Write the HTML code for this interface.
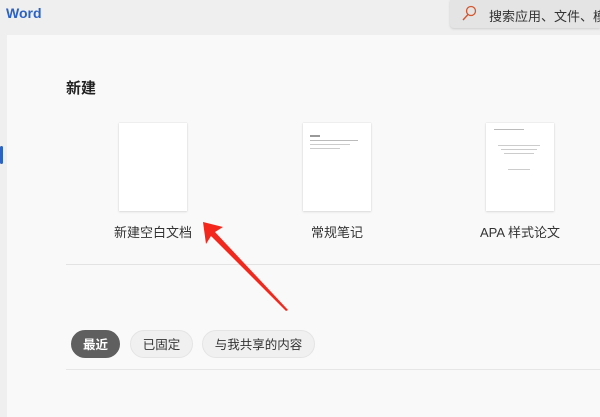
<!DOCTYPE html>
<html><head><meta charset="utf-8"><style>
body{margin:0;width:600px;height:417px;overflow:hidden;background:#efefef;font-family:"Liberation Sans","Noto Sans CJK SC",sans-serif;position:relative}
.a{position:absolute}
.doc{position:absolute;top:123px;width:68px;height:88px;background:#fff;box-shadow:0 0 1px #ccc,0 1px 2px #ddd}
.lbl{position:absolute;top:222px;font-size:13px;color:#333;text-align:center;width:160px}
.pill{position:absolute;top:330px;height:28px;line-height:28px;border-radius:14px;font-size:12.5px;text-align:center;background:#f0f0f0;border:1px solid #e4e4e4;color:#333;box-sizing:border-box}
.ln{position:absolute;height:1px;background:#d0d0d0}
</style></head><body>
<div class="a" style="left:6px;top:5px;font-size:14px;font-weight:bold;color:#2b62c5">Word</div>
<div class="a" style="left:450px;top:0;width:150px;height:28px;background:#e4e4e4;border-radius:0 0 0 4px;box-shadow:0 1px 2px #ccc"></div>
<svg class="a" style="left:461px;top:5px" width="16" height="17"><circle cx="10" cy="6" r="4.5" fill="none" stroke="#d4572e" stroke-width="1.3"/><line x1="7" y1="9.5" x2="2" y2="15" stroke="#d4572e" stroke-width="1.4"/></svg>
<div class="a" style="left:489px;top:6px;font-size:13px;color:#333;white-space:nowrap">搜索应用、文件、模</div>
<div class="a" style="left:7px;top:35px;width:593px;height:382px;background:#f9f9f9"></div>
<div class="a" style="left:0;top:146px;width:3px;height:18px;background:#2b62c5;border-radius:2px"></div>
<div class="a" style="left:66px;top:77px;font-size:15px;color:#222;font-weight:bold">新建</div>
<div class="doc" style="left:119px"></div>
<div class="doc" style="left:303px"><div class="a" style="left:7px;top:12px;width:10px;height:2px;background:#999"></div><div class="a" style="left:7px;top:17px;width:48px;height:1px;background:#bbb"></div><div class="a" style="left:7px;top:21px;width:40px;height:1px;background:#ccc"></div><div class="a" style="left:7px;top:25px;width:30px;height:1px;background:#ccc"></div></div>
<div class="doc" style="left:486px"><div class="a" style="left:8px;top:6px;width:30px;height:1px;background:#bbb"></div><div class="a" style="left:12px;top:22px;width:42px;height:1px;background:#ccc"></div><div class="a" style="left:15px;top:26px;width:36px;height:1px;background:#ccc"></div><div class="a" style="left:18px;top:30px;width:30px;height:1px;background:#ccc"></div><div class="a" style="left:22px;top:46px;width:22px;height:1px;background:#ccc"></div></div>
<div class="lbl" style="left:73px">新建空白文档</div>
<div class="lbl" style="left:257px">常规笔记</div>
<div class="lbl" style="left:440px">APA 样式论文</div>
<div class="ln" style="left:66px;top:264px;width:534px;background:#e3e3e3"></div>
<div class="pill" style="left:71px;width:49px;background:#5f5f5f;border-color:#5f5f5f;color:#fff;font-weight:bold">最近</div>
<div class="pill" style="left:130px;width:63px">已固定</div>
<div class="pill" style="left:202px;width:113px">与我共享的内容</div>
<div class="ln" style="left:66px;top:369px;width:534px;background:#e6e6e6"></div>
<svg class="a" style="left:0;top:0" width="600" height="417"><polygon points="203,222 223,227 215,232 288,310 286,311 211,236 206,244" fill="#f3271c"/></svg>
</body></html>
